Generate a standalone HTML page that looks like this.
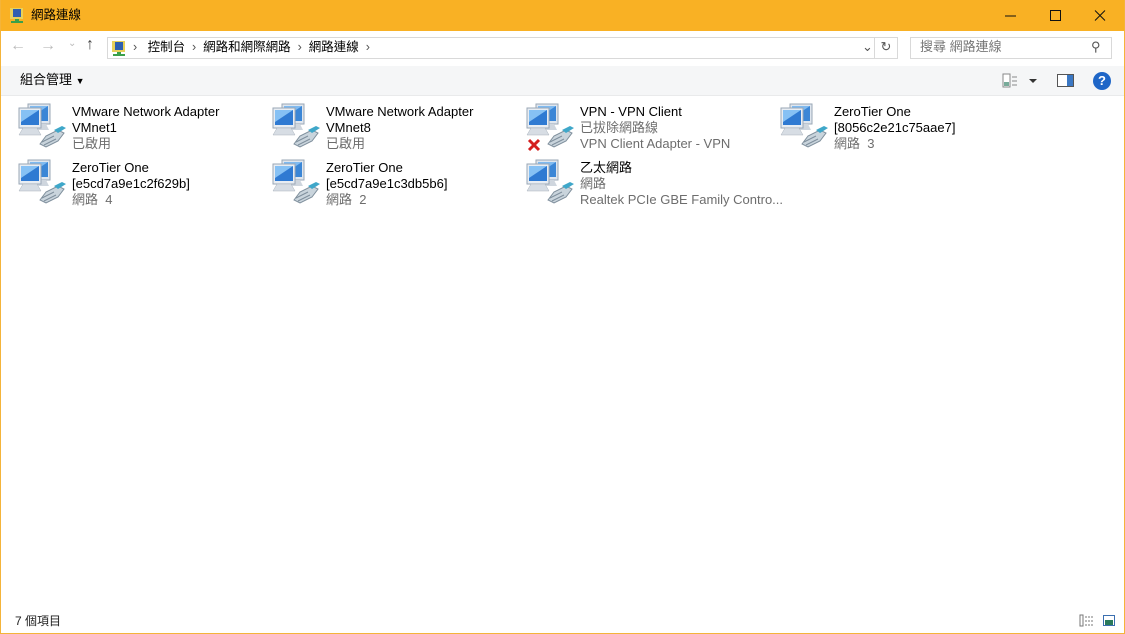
<!DOCTYPE html>
<html><head><meta charset="utf-8"><style>
*{margin:0;padding:0;box-sizing:border-box}
body{width:1125px;height:634px;overflow:hidden;background:#fff;font-family:"Liberation Sans","Noto Sans CJK TC",sans-serif;font-size:13px;color:#000;position:relative}
.frame{position:absolute;left:0;top:0;width:1125px;height:634px;border:1px solid #f4b43a;border-top:none}
.title{position:absolute;left:0;top:0;width:1125px;height:31px;background:#f9b124}
.title .t{position:absolute;left:31px;top:5px;font-size:12.5px;line-height:20px}
.abs{position:absolute}
.addr{position:absolute;left:107px;top:37px;width:768px;height:22px;border:1px solid #d9d9d9;background:#fff}
.search{position:absolute;left:910px;top:37px;width:202px;height:22px;border:1px solid #d9d9d9}
.tb{position:absolute;left:1px;top:66px;width:1123px;height:30px;background:#f5f6f7;border-bottom:1px solid #e9eaeb}
.item{position:absolute;line-height:16px;white-space:nowrap}
.item span,.item div{line-height:16px}
.g{color:#6d6d6d}
.ic{position:absolute;width:50px;height:50px}
</style></head><body>
<div class="title"><div class="t">網路連線</div></div>
<svg class="abs" style="left:9px;top:7px" width="16" height="17" viewBox="0 0 16 17"><rect x="1" y="1" width="13" height="11" fill="#e8d15a"/><rect x="4" y="2" width="8" height="8" fill="#2f5fb0"/><rect x="6" y="12" width="4" height="3" fill="#3aa04a"/><rect x="2" y="14" width="12" height="2" fill="#3aa04a"/></svg>
<svg class="abs" style="left:1000px;top:8px" width="112" height="16"><line x1="5" y1="8" x2="16" y2="8" stroke="#111"/><rect x="50.5" y="2.5" width="10" height="10" fill="none" stroke="#111"/><path d="M95 2.5l10 10M105 2.5l-10 10" stroke="#111"/></svg>
<div class="abs" style="left:10px;top:35px;color:#bbb;font-size:16px;line-height:22px">←</div>
<div class="abs" style="left:40px;top:35px;color:#bbb;font-size:16px;line-height:22px">→</div>
<div class="abs" style="left:68px;top:38px;color:#bbb;font-size:10px">⌄</div>
<div class="abs" style="left:86px;top:34px;color:#444;font-size:16px;line-height:22px">↑</div>
<div class="addr">
<svg class="abs" style="left:3px;top:2px" width="16" height="17"><rect x="1" y="1" width="13" height="11" fill="#e8d15a"/><rect x="4" y="2" width="8" height="8" fill="#2f5fb0"/><rect x="6" y="12" width="4" height="3" fill="#3aa04a"/><rect x="2" y="14" width="12" height="2" fill="#3aa04a"/></svg>
<div class="abs" style="left:25px;top:0px;font-size:12.5px;line-height:18px"><span style="color:#555">›</span>&nbsp;&nbsp; 控制台 &nbsp;<span style="color:#555">›</span>&nbsp; 網路和網際網路 &nbsp;<span style="color:#555">›</span>&nbsp; 網路連線 &nbsp;<span style="color:#555">›</span></div>
<div class="abs" style="left:754px;top:0px;color:#555;line-height:18px">⌄</div>
</div>
<div class="abs" style="left:875px;top:37px;width:23px;height:22px;border:1px solid #d9d9d9;border-left:none;text-align:center;line-height:18px;color:#555">↻</div>
<div class="search"><span class="abs" style="left:9px;top:0px;color:#777;line-height:18px">搜尋 網路連線</span><span class="abs" style="left:180px;top:0px;color:#555;font-size:13px;line-height:18px">⚲</span></div>
<div class="tb"><span class="abs" style="left:19px;top:4px;line-height:20px">組合管理 <span style="font-size:9px">▼</span></span>
<svg class="abs" style="left:1000px;top:7px" width="40" height="16"><rect x="2" y="1" width="7" height="13" fill="#fff" stroke="#888"/><rect x="3" y="9" width="5" height="4" fill="#7a9"/><path d="M11 4h5M11 8h5M11 12h5" stroke="#888"/><path d="M28 6l4 4 4-4z" fill="#333"/></svg>
<svg class="abs" style="left:1056px;top:8px" width="18" height="14"><rect x="0.5" y="0.5" width="16" height="12" fill="#fff" stroke="#555"/><rect x="10" y="1" width="6" height="11" fill="#3b78c4"/></svg>
<div class="abs" style="left:1092px;top:6px;width:18px;height:18px;border-radius:50%;background:#1f66c7;color:#fff;font-weight:bold;text-align:center;line-height:18px;font-size:13px">?</div>
</div>
<svg width="0" height="0" style="position:absolute"><defs><g id="ni">
<rect x="10" y="2" width="22" height="20" fill="#dfe6ee" stroke="#9aa7b6"/><rect x="12" y="4" width="18" height="15" fill="#3b86d6"/>
<path d="M12 4h18l-18 12z" fill="#7fbaf0"/><path d="M14 22h14l3 6H11z" fill="#cfd6de"/>
<rect x="1" y="6" width="22" height="20" fill="#e8edf3" stroke="#9aa7b6"/><rect x="3" y="8" width="18" height="15" fill="#2f7ad2"/>
<path d="M3 8h18L3 20z" fill="#86c1f4"/><path d="M5 26h14l4 7H1z" fill="#d7dde4" stroke="#aab3bd" stroke-width=".5"/>
<path d="M22 42l6-8 12-6 6 3-6 8-12 6z" fill="#c9d4dc" stroke="#7f8f9c"/><path d="M36 28l8-4 4 2-8 5z" fill="#3fa7c9"/><path d="M24 40l12-6M26 43l12-6" stroke="#7f8f9c"/>
</g></defs></svg>
<svg class="ic" style="left:18px;top:102px"><use href="#ni"/></svg>
<svg class="ic" style="left:272px;top:102px"><use href="#ni"/></svg>
<svg class="ic" style="left:526px;top:102px"><use href="#ni"/></svg>
<svg class="ic" style="left:780px;top:102px"><use href="#ni"/></svg>
<svg class="ic" style="left:18px;top:158px"><use href="#ni"/></svg>
<svg class="ic" style="left:272px;top:158px"><use href="#ni"/></svg>
<svg class="ic" style="left:526px;top:158px"><use href="#ni"/></svg>
<svg class="abs" style="left:527px;top:138px" width="14" height="14"><path d="M2 2l10 10M12 2L2 12" stroke="#d42020" stroke-width="3"/></svg>
<div class="item" style="left:72px;top:104px">VMware Network Adapter<br>VMnet1<br><span class="g">已啟用</span></div>
<div class="item" style="left:326px;top:104px">VMware Network Adapter<br>VMnet8<br><span class="g">已啟用</span></div>
<div class="item" style="left:580px;top:104px">VPN - VPN Client<br><span class="g">已拔除網路線<br>VPN Client Adapter - VPN</span></div>
<div class="item" style="left:834px;top:104px">ZeroTier One<br>[8056c2e21c75aae7]<br><span class="g">網路 &nbsp;3</span></div>
<div class="item" style="left:72px;top:160px">ZeroTier One<br>[e5cd7a9e1c2f629b]<br><span class="g">網路 &nbsp;4</span></div>
<div class="item" style="left:326px;top:160px">ZeroTier One<br>[e5cd7a9e1c3db5b6]<br><span class="g">網路 &nbsp;2</span></div>
<div class="item" style="left:580px;top:160px">乙太網路<br><span class="g">網路<br>Realtek PCIe GBE Family Contro...</span></div>
<div class="abs" style="left:15px;top:612px;font-size:12px;color:#222;line-height:18px">7 個項目</div>
<svg class="abs" style="left:1079px;top:614px" width="40" height="14"><rect x="1" y="1" width="3" height="11" fill="none" stroke="#777"/><path d="M6 3h8M6 7h8M6 11h8" stroke="#777" stroke-dasharray="2 1"/><rect x="24.5" y="1.5" width="11" height="10" fill="#fff" stroke="#3b6fb0"/><rect x="26" y="6" width="8" height="5" fill="#2a7a5a"/></svg>
<div class="frame"></div>
</body></html>
